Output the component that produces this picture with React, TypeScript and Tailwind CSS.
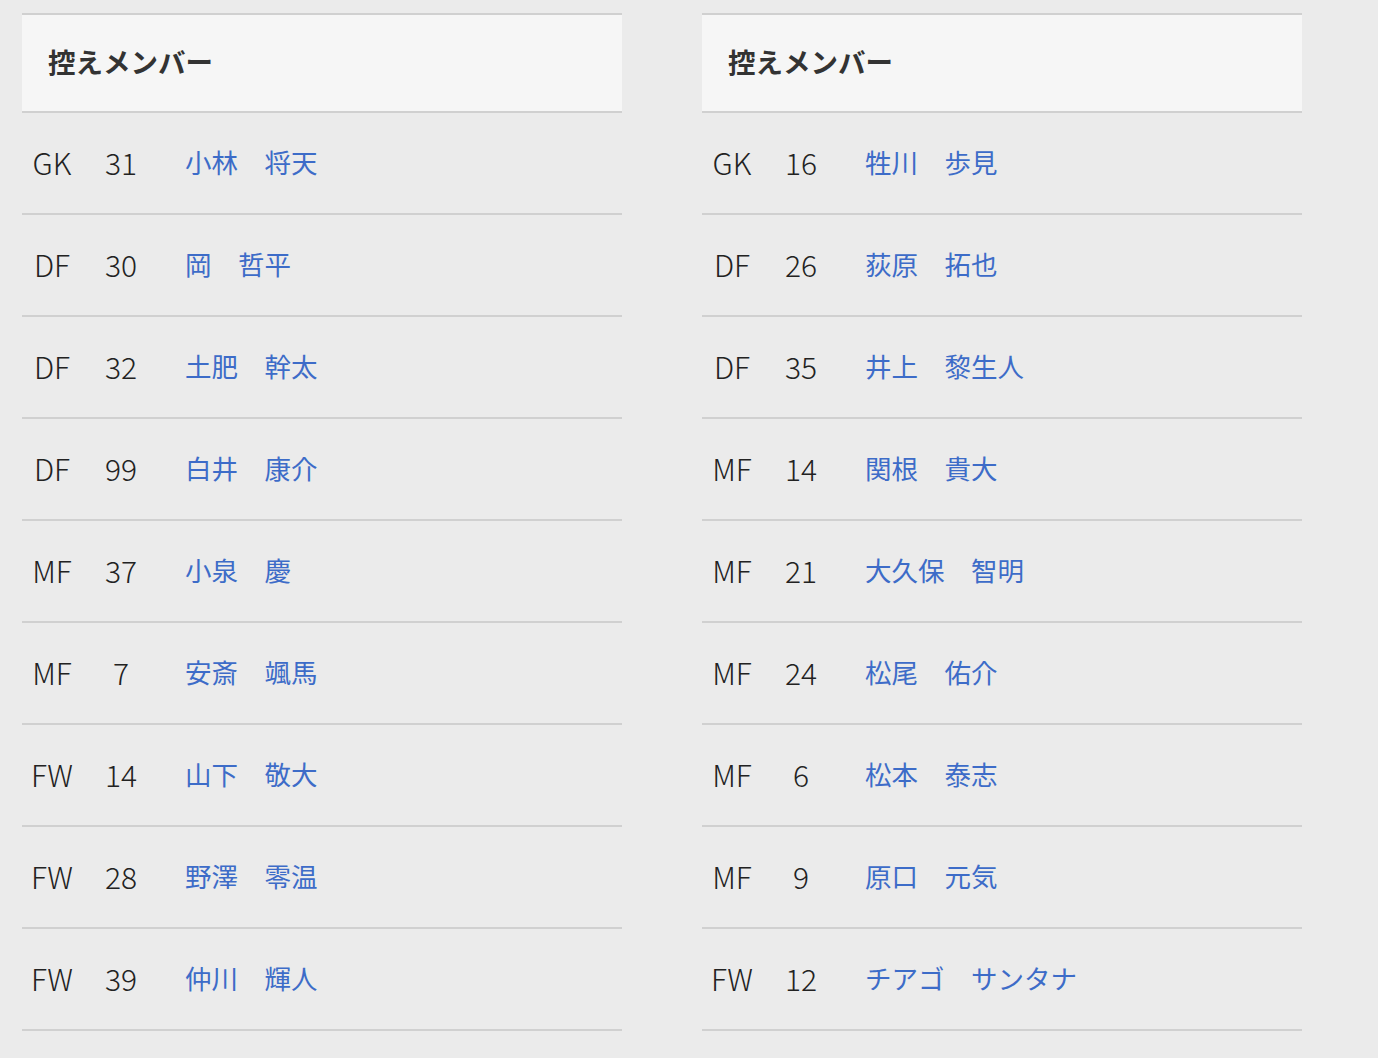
import React from "react";

type Row = [string, string, string];

const left: Row[] = [
  ["GK", "31", "小林　将天"],
  ["DF", "30", "岡　哲平"],
  ["DF", "32", "土肥　幹太"],
  ["DF", "99", "白井　康介"],
  ["MF", "37", "小泉　慶"],
  ["MF", "7", "安斎　颯馬"],
  ["FW", "14", "山下　敬大"],
  ["FW", "28", "野澤　零温"],
  ["FW", "39", "仲川　輝人"],
];

const right: Row[] = [
  ["GK", "16", "牲川　歩見"],
  ["DF", "26", "荻原　拓也"],
  ["DF", "35", "井上　黎生人"],
  ["MF", "14", "関根　貴大"],
  ["MF", "21", "大久保　智明"],
  ["MF", "24", "松尾　佑介"],
  ["MF", "6", "松本　泰志"],
  ["MF", "9", "原口　元気"],
  ["FW", "12", "チアゴ　サンタナ"],
];

function Table({ rows }: { rows: Row[] }) {
  return (
    <div className="w-[600px]">
      <div className="border-t-2 border-b-2 border-[#d0d0d0] bg-[#f6f6f6] h-[100px] flex items-center pl-[26px] pb-[3px]">
        <span className="text-[27.5px] font-bold text-[#333333]">控えメンバー</span>
      </div>
      {rows.map((r, i) => (
        <div key={i} className="h-[102px] border-b-2 border-[#d0d0d0] flex items-center pb-[2px]">
          <div className="w-[60px] text-center text-[#222222] text-[30px] font-light">{r[0]}</div>
          <div className="w-[78px] text-center text-[#222222] text-[30px] font-light">{r[1]}</div>
          <div className="pl-[25px] text-[#3d6cc8] text-[26.5px]">{r[2]}</div>
        </div>
      ))}
    </div>
  );
}

export default function App() {
  return (
    <div
      className="w-[1378px] h-[1058px] bg-[#ebebeb] overflow-hidden pt-[13px] pl-[22px] flex gap-[80px]"
      style={{ fontFamily: '"Noto Sans CJK JP", "Noto Sans", sans-serif' }}
    >
      <Table rows={left} />
      <Table rows={right} />
    </div>
  );
}
